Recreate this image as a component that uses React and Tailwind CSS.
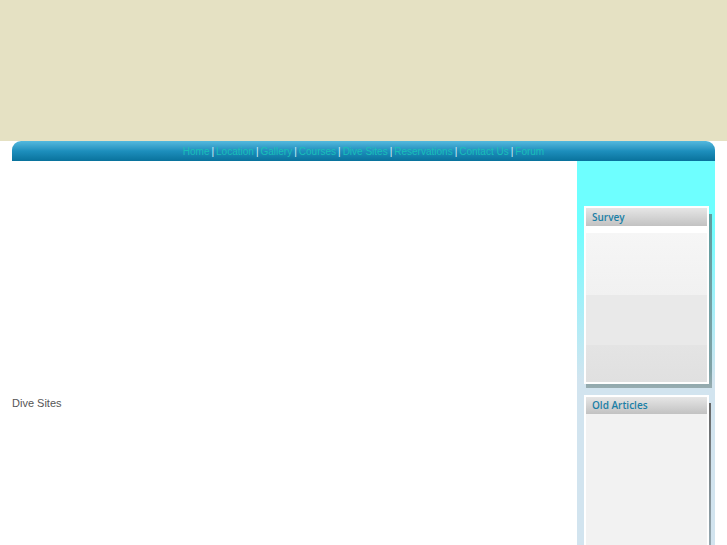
export default function App() {
  const links = ["Home", "Location", "Gallery", "Courses", "Dive Sites", "Reservations", "Contact Us", "Forum"];

  return (
    <div className="min-h-[545px] bg-white font-['Liberation_Sans',Arial,sans-serif]">
      <header className="h-[141px] bg-[#e5e1c3]" />

      <div className="mx-auto w-[703px]">
        <nav className="flex h-[20px] items-center justify-center rounded-t-[9px] bg-gradient-to-b from-[#53b9de] via-[#1d8fbd] to-[#08729c] pt-[1px] text-[10px] leading-none">
          {links.map((l, i) => (
            <span key={l} className="flex items-center">
              {i > 0 && <span className="px-[2px] text-[#d6eef6]">|</span>}
              <a className="text-[#19bfb8]">{l}</a>
            </span>
          ))}
        </nav>

        <div className="flex">
          <main className="flex h-[384px] w-[565px] items-center pt-[100px] text-[11px] text-[#555]">
            Dive Sites
          </main>

          <aside className="h-[384px] w-[138px] overflow-hidden bg-[linear-gradient(to_bottom,#6effff_0px,#6effff_60px,#a8eef8_150px,#d2e4ef_220px,#d2e4ef_100%)] pl-[7px] pt-[45px]">
            <div className="relative w-[125px]">
              <div className="absolute left-[2px] top-[8px] h-[174px] w-[126px] bg-[linear-gradient(to_bottom,#5f9d9f,#7fa2a6_90%,#97acb0)]" />
              <div className="relative border-2 border-white bg-white">
                <div className="flex h-[18px] items-center bg-gradient-to-b from-[#e6e6e6] to-[#c2c2c2] px-[6px] font-['Open_Sans',sans-serif] text-[10px] font-semibold text-[#1a7fa6]">
                  Survey
                </div>
                <div className="mt-[7px] flex flex-col">
                  <div className="h-[62px] bg-gradient-to-b from-[#f6f6f6] to-[#f1f1f1]" />
                  <div className="h-[50px] bg-[#e9e9e9]" />
                  <div className="h-[37px] bg-gradient-to-b from-[#e4e4e4] to-[#e0e0e0]" />
                </div>
              </div>
            </div>

            <div className="relative mt-[11px] w-[125px]">
              <div className="absolute left-[4px] top-[8px] h-[200px] w-[123px] bg-[linear-gradient(to_bottom,#666,#a8c4d0)]" />
              <div className="relative border-2 border-white bg-white">
                <div className="flex h-[17px] items-center bg-gradient-to-b from-[#e6e6e6] to-[#c2c2c2] px-[6px] font-['Open_Sans',sans-serif] text-[10px] font-semibold text-[#1a7fa6]">
                  Old Articles
                </div>
                <div className="h-[140px] bg-[#f2f2f2]" />
              </div>
            </div>
          </aside>
        </div>
      </div>
    </div>
  );
}
